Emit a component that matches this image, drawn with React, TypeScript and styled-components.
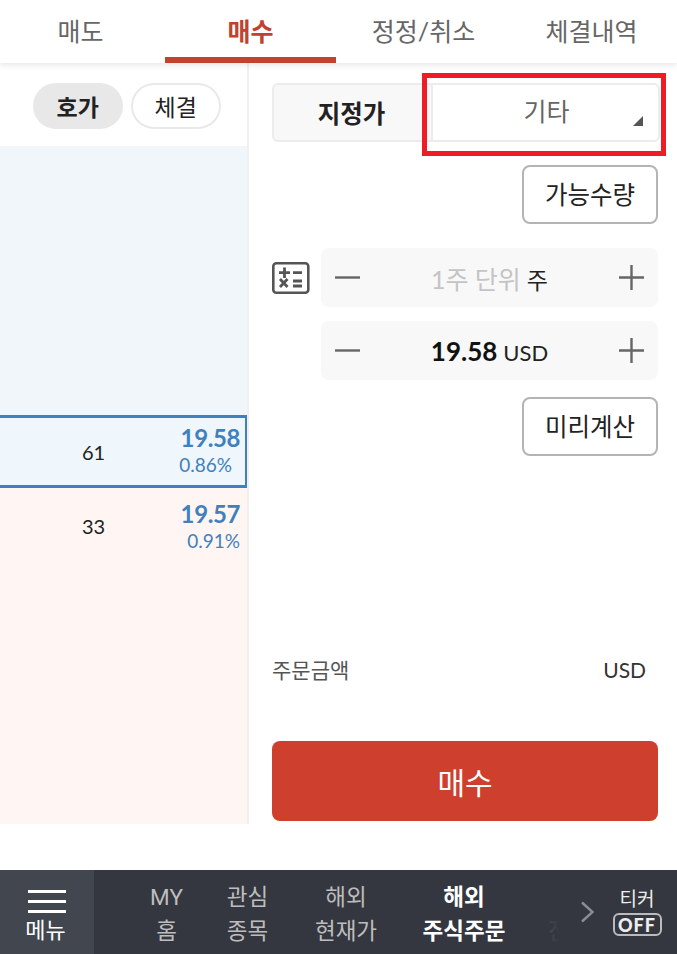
import { FC } from "react";
import styled, { createGlobalStyle } from "styled-components";

const GlobalStyle = createGlobalStyle`
    html, body {
        margin: 0;
        padding: 0;
        background: #fff;
    }
    body {
        font-family: "Lato", "Noto Sans CJK KR", sans-serif;
        color: #222;
    }
    * {
        box-sizing: border-box;
    }
`;

const Screen = styled.div`
    width: 677px;
    height: 954px;
    display: flex;
    flex-direction: column;
    overflow: hidden;
    position: relative;
`;

const Tabs = styled.nav`
    height: 63px;
    display: grid;
    grid-template-columns: 165px 171px 175px 166px;
    position: relative;
    z-index: 1;
    background: #fff;
    box-shadow: 0 2px 6px rgba(0, 0, 0, 0.1);
`;

const Tab = styled.div<{ $active?: boolean; $shift?: number }>`
    display: flex;
    align-items: center;
    justify-content: center;
    padding-top: 2px;
    padding-right: ${(p) => p.$shift ?? 0}px;
    font-size: 25px;
    font-weight: ${(p) => (p.$active ? 700 : 400)};
    color: ${(p) => (p.$active ? "#c0422f" : "#666")};
    border-bottom: 6px solid ${(p) => (p.$active ? "#c0422f" : "transparent")};
`;

const Body = styled.main`
    height: 761px;
    display: grid;
    grid-template-columns: 249px 1fr;
`;

const BookColumn = styled.section`
    display: flex;
    flex-direction: column;
    border-right: 2px solid #f0f0f0;
`;

const PillRow = styled.div`
    height: 83px;
    padding: 20px 26px 0 33px;
    display: flex;
    gap: 8px;
`;

const Pill = styled.div<{ $active?: boolean }>`
    width: ${(p) => (p.$active ? 90 : 91)}px;
    height: 46px;
    border-radius: 23px;
    display: flex;
    align-items: center;
    justify-content: center;
    font-size: 23px;
    font-weight: ${(p) => (p.$active ? 700 : 400)};
    color: #222;
    background: ${(p) => (p.$active ? "#e8e8e8" : "#fff")};
    border: 2px solid ${(p) => (p.$active ? "#e8e8e8" : "#e9e9e9")};
`;

const SellArea = styled.div`
    height: 269px;
    background: #f1f6fb;
`;

const BookRow = styled.div<{ $selected?: boolean }>`
    height: ${(p) => (p.$selected ? 73 : 336)}px;
    display: flex;
    align-items: flex-start;
    justify-content: space-between;
    background: ${(p) => (p.$selected ? "#eff7fd" : "#fff6f3")};
    ${(p) =>
        p.$selected
            ? "border: solid #3f80be; border-width: 3px 2px 3px 0;"
            : "padding: 6px 2px 0 0;"}
`;

const Volume = styled.div<{ $top: number }>`
    padding-left: 82px;
    padding-top: ${(p) => p.$top}px;
    font-size: 20px;
    line-height: 24px;
`;

const PriceCell = styled.div`
    display: flex;
    flex-direction: column;
    align-items: flex-end;
    padding-top: 5px;
    padding-right: 5px;
    color: #3f80be;
`;

const Price = styled.div`
    font-size: 24px;
    font-weight: 700;
    letter-spacing: -0.4px;
    line-height: 30px;
`;

const Rate = styled.div<{ $inset?: number }>`
    font-size: 19px;
    line-height: 24px;
    margin-right: ${(p) => p.$inset ?? 0}px;
`;

const OrderColumn = styled.section`
    padding: 20px 19px 0 23px;
    display: flex;
    flex-direction: column;
    align-items: stretch;
`;

const OrderType = styled.div`
    height: 59px;
    display: grid;
    grid-template-columns: 159px 1fr;
    margin-right: -2px;
`;

const TypeFixed = styled.div`
    display: flex;
    align-items: center;
    justify-content: center;
    padding-right: 2px;
    font-size: 24.5px;
    font-weight: 700;
    color: #222;
    background: #f8f8f8;
    border: 2px solid #ececec;
    border-right: 0;
    border-radius: 6px 0 0 6px;
`;

const TypeSelect = styled.div`
    position: relative;
    display: flex;
    align-items: center;
    justify-content: center;
    font-size: 25px;
    color: #666;
    background: #fff;
    border: 2px solid #ececec;
    border-radius: 0 6px 6px 0;
    padding-left: 2px;
    padding-bottom: 6px;
`;

const SelectCaret = styled.span`
    position: absolute;
    right: 15px;
    bottom: 14px;
    width: 0;
    height: 0;
    border-style: solid;
    border-width: 0 0 10px 10px;
    border-color: transparent transparent #555 transparent;
`;

const Highlight = styled.div`
    position: absolute;
    left: 422px;
    top: 73px;
    width: 244px;
    height: 83px;
    border: 5px solid #ee1c25;
    pointer-events: none;
`;

const OutlineButton = styled.button<{ $top: number }>`
    align-self: flex-end;
    width: 136px;
    height: 59px;
    margin-top: ${(p) => p.$top}px;
    background: #fff;
    border: 2px solid #b4b4b4;
    border-radius: 8px;
    font-family: inherit;
    font-size: 24.5px;
    color: #222;
    padding: 0 0 2px;
`;

const StepperRow = styled.div<{ $top: number }>`
    margin-top: ${(p) => p.$top}px;
    display: grid;
    grid-template-columns: 49px 1fr;
    align-items: center;
`;

const CalcIcon = styled.svg`
    width: 38px;
    height: 32px;
    display: block;
`;

const Stepper = styled.div`
    grid-column: 2;
    height: 59px;
    display: flex;
    align-items: center;
    justify-content: space-between;
    padding: 0 13px;
    background: #f8f8f8;
    border-radius: 8px;
`;

const StepIcon = styled.svg`
    width: 27px;
    height: 27px;
    display: block;
`;

const StepValue = styled.div`
    display: flex;
    align-items: baseline;
    gap: 6px;
`;

const Placeholder = styled.span`
    font-size: 25px;
    color: #c4c4c4;
`;

const ValueStrong = styled.span`
    font-size: 26px;
    font-weight: 700;
    color: #111;
`;

const Unit = styled.span<{ $small?: boolean }>`
    font-size: ${(p) => (p.$small ? 23 : 22)}px;
    color: #222;
`;

const TotalRow = styled.div`
    margin-top: 198px;
    padding-right: 12px;
    height: 30px;
    display: flex;
    align-items: center;
    justify-content: space-between;
    font-size: 21px;
    color: #555;
`;

const TotalUnit = styled.span`
    font-size: 21px;
    color: #333;
`;

const BuyButton = styled.button`
    margin-top: 57px;
    height: 80px;
    background: #cf3f2e;
    border: 0;
    border-radius: 8px;
    font-family: inherit;
    font-size: 30px;
    color: #fff;
`;

const BottomNav = styled.footer`
    margin-top: 46px;
    height: 84px;
    display: flex;
    background: #34373f;
`;

const MenuCell = styled.div`
    width: 94px;
    flex: none;
    display: flex;
    flex-direction: column;
    align-items: center;
    padding-top: 20px;
    background: #42464f;
    color: #fff;
`;

const MenuBar = styled.span`
    display: block;
    width: 38px;
    height: 3px;
    margin-bottom: 7px;
    background: #fff;
`;

const MenuLabel = styled.span`
    font-size: 22px;
    line-height: 26px;
    margin-top: -3px;
    margin-left: -3px;
`;

const NavScroller = styled.div`
    width: 476px;
    flex: none;
    position: relative;
    overflow: hidden;
    display: flex;
    padding-left: 32px;
`;

const NavItem = styled.div<{ $width: number; $active?: boolean }>`
    width: ${(p) => p.$width}px;
    flex: none;
    padding-top: 10px;
    text-align: center;
    font-family: "Roboto", "Noto Sans CJK KR", sans-serif;
    font-size: 22.5px;
    line-height: 34px;
    font-weight: ${(p) => (p.$active ? 700 : 400)};
    color: ${(p) => (p.$active ? "#fff" : "#bdbdbd")};
    white-space: nowrap;
`;

const NavFade = styled.div`
    position: absolute;
    top: 0;
    right: 0;
    bottom: 0;
    width: 30px;
    background: linear-gradient(to right, rgba(52, 55, 63, 0.75), #34373f 67%);
`;

const Chevron = styled.svg`
    width: 18px;
    height: 26px;
    flex: none;
    align-self: center;
    margin: 0 0 0 9px;
    display: block;
`;

const TickerCell = styled.div`
    flex: 1;
    display: flex;
    flex-direction: column;
    align-items: center;
    padding-top: 16px;
    color: #eee;
`;

const TickerLabel = styled.span`
    font-size: 19px;
    line-height: 26px;
`;

const OffBadge = styled.span`
    width: 49px;
    height: 23px;
    margin-top: 1px;
    border: 2px solid #bbb;
    border-radius: 6px;
    display: flex;
    align-items: center;
    justify-content: center;
    font-size: 18px;
    font-weight: 900;
    letter-spacing: 1px;
    color: #eee;
`;

const tabs = [
    { label: "매도", shift: 4 },
    { label: "매수" },
    { label: "정정/취소" },
    { label: "체결내역", shift: 5 },
];

const navItems = [
    { top: "MY", bottom: "홈", width: 81 },
    { top: "관심", bottom: "종목", width: 81 },
    { top: "해외", bottom: "현재가", width: 116 },
    { top: "해외", bottom: "주식주문", width: 120, active: true },
    { top: "", bottom: "잔고", width: 90 },
];

const Minus: FC = () => (
    <StepIcon viewBox="0 0 27 27">
        <path d="M1 13.5h25" stroke="#666" strokeWidth="2.4" />
    </StepIcon>
);

const Plus: FC = () => (
    <StepIcon viewBox="0 0 27 27">
        <path d="M1 13.5h25M13.5 1v25" stroke="#666" strokeWidth="2.4" />
    </StepIcon>
);

const App: FC = () => {
    return (
        <Screen>
            <GlobalStyle />
            <Tabs>
                {tabs.map((tab) => (
                    <Tab key={tab.label} $active={tab.label === "매수"} $shift={tab.shift}>
                        {tab.label}
                    </Tab>
                ))}
            </Tabs>
            <Body>
                <BookColumn>
                    <PillRow>
                        <Pill $active>호가</Pill>
                        <Pill>체결</Pill>
                    </PillRow>
                    <SellArea />
                    <BookRow $selected>
                        <Volume $top={22}>61</Volume>
                        <PriceCell>
                            <Price>19.58</Price>
                            <Rate $inset={8}>0.86%</Rate>
                        </PriceCell>
                    </BookRow>
                    <BookRow>
                        <Volume $top={20}>33</Volume>
                        <PriceCell>
                            <Price>19.57</Price>
                            <Rate>0.91%</Rate>
                        </PriceCell>
                    </BookRow>
                </BookColumn>
                <OrderColumn>
                    <OrderType>
                        <TypeFixed>지정가</TypeFixed>
                        <TypeSelect>
                            기타
                            <SelectCaret />
                        </TypeSelect>
                    </OrderType>
                    <OutlineButton $top={23}>가능수량</OutlineButton>
                    <StepperRow $top={24}>
                        <CalcIcon viewBox="0 0 38 32">
                            <rect x="1.3" y="1.3" width="35" height="29.4" rx="3" fill="none" stroke="#555" strokeWidth="2.6" />
                            <path d="M7 10.7h11M12.5 5.5v10.4M21 10.7h9M8 17l7.5 8M15.5 17L8 25M21 19h9M21 24h9" stroke="#555" strokeWidth="2.8" fill="none" />
                        </CalcIcon>
                        <Stepper>
                            <Minus />
                            <StepValue>
                                <Placeholder>1주 단위</Placeholder>
                                <Unit $small>주</Unit>
                            </StepValue>
                            <Plus />
                        </Stepper>
                    </StepperRow>
                    <StepperRow $top={14}>
                        <Stepper>
                            <Minus />
                            <StepValue>
                                <ValueStrong>19.58</ValueStrong>
                                <Unit>USD</Unit>
                            </StepValue>
                            <Plus />
                        </Stepper>
                    </StepperRow>
                    <OutlineButton $top={17}>미리계산</OutlineButton>
                    <TotalRow>
                        <span>주문금액</span>
                        <TotalUnit>USD</TotalUnit>
                    </TotalRow>
                    <BuyButton>매수</BuyButton>
                </OrderColumn>
            </Body>
            <BottomNav>
                <MenuCell>
                    <MenuBar />
                    <MenuBar />
                    <MenuBar />
                    <MenuLabel>메뉴</MenuLabel>
                </MenuCell>
                <NavScroller>
                    {navItems.map((item) => (
                        <NavItem key={item.bottom} $width={item.width} $active={item.active}>
                            {item.top || "\u00a0"}
                            <br />
                            {item.bottom}
                        </NavItem>
                    ))}
                    <NavFade />
                </NavScroller>
                <Chevron viewBox="0 0 18 26">
                    <path d="M3 3.5l10.5 9.5L3 22.5" stroke="#8a8d93" strokeWidth="2.4" fill="none" />
                </Chevron>
                <TickerCell>
                    <TickerLabel>티커</TickerLabel>
                    <OffBadge>OFF</OffBadge>
                </TickerCell>
            </BottomNav>
            <Highlight />
        </Screen>
    );
};

export default App;
